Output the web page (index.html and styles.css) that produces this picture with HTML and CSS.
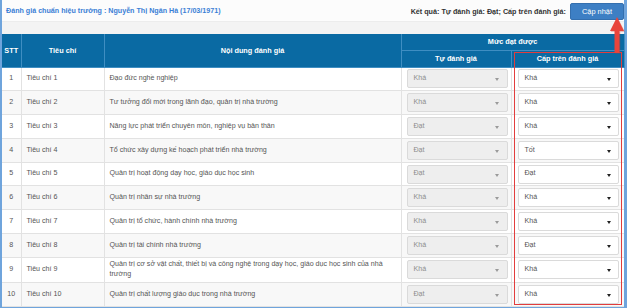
FILE: index.html
```html
<!DOCTYPE html>
<html lang="vi">
<head>
<meta charset="utf-8">
<link rel="stylesheet" href="styles.css">
</head>
<body>
<div class="frame">
  <div class="topbar">
    <div class="title">Đánh giá chuẩn hiệu trưởng : Nguyễn Thị Ngân Hà (17/03/1971)</div>
    <div class="actions">
      <span class="result">Kết quả: Tự đánh giá: Đạt; Cấp trên đánh giá:</span>
      <button class="btn">Cập nhật</button>
    </div>
  </div>
  <div class="strip"></div>
  <table class="grid">
    <colgroup>
      <col class="c-stt"><col class="c-tc"><col class="c-nd"><col class="c-td"><col class="c-ct">
    </colgroup>
    <thead>
      <tr class="h1">
        <th rowspan="2">STT</th>
        <th rowspan="2">Tiêu chí</th>
        <th rowspan="2">Nội dung đánh giá</th>
        <th colspan="2">Mức đạt được</th>
      </tr>
      <tr class="h2">
        <th>Tự đánh giá</th>
        <th>Cấp trên đánh giá</th>
      </tr>
    </thead>
    <tbody>
      <tr><td class="stt">1</td><td>Tiêu chí 1</td><td class="nd">Đạo đức nghề nghiệp</td><td class="sel-cell"><div class="sel dis">Khá<i></i></div></td><td class="sel-cell r"><div class="sel">Khá<i></i></div></td></tr>
      <tr><td class="stt">2</td><td>Tiêu chí 2</td><td class="nd">Tư tưởng đổi mới trong lãnh đạo, quản trị nhà trường</td><td class="sel-cell"><div class="sel dis">Khá<i></i></div></td><td class="sel-cell r"><div class="sel">Khá<i></i></div></td></tr>
      <tr><td class="stt">3</td><td>Tiêu chí 3</td><td class="nd">Năng lực phát triển chuyên môn, nghiệp vụ bản thân</td><td class="sel-cell"><div class="sel dis">Đạt<i></i></div></td><td class="sel-cell r"><div class="sel">Khá<i></i></div></td></tr>
      <tr><td class="stt">4</td><td>Tiêu chí 4</td><td class="nd">Tổ chức xây dựng kế hoạch phát triển nhà trường</td><td class="sel-cell"><div class="sel dis">Đạt<i></i></div></td><td class="sel-cell r"><div class="sel">Tốt<i></i></div></td></tr>
      <tr><td class="stt">5</td><td>Tiêu chí 5</td><td class="nd">Quản trị hoạt động dạy học, giáo dục học sinh</td><td class="sel-cell"><div class="sel dis">Đạt<i></i></div></td><td class="sel-cell r"><div class="sel">Đạt<i></i></div></td></tr>
      <tr><td class="stt">6</td><td>Tiêu chí 6</td><td class="nd">Quản trị nhân sự nhà trường</td><td class="sel-cell"><div class="sel dis">Khá<i></i></div></td><td class="sel-cell r"><div class="sel">Khá<i></i></div></td></tr>
      <tr><td class="stt">7</td><td>Tiêu chí 7</td><td class="nd">Quản trị tổ chức, hành chính nhà trường</td><td class="sel-cell"><div class="sel dis">Khá<i></i></div></td><td class="sel-cell r"><div class="sel">Khá<i></i></div></td></tr>
      <tr><td class="stt">8</td><td>Tiêu chí 8</td><td class="nd">Quản trị tài chính nhà trường</td><td class="sel-cell"><div class="sel dis">Khá<i></i></div></td><td class="sel-cell r"><div class="sel">Đạt<i></i></div></td></tr>
      <tr class="tall"><td class="stt">9</td><td>Tiêu chí 9</td><td class="nd wide">Quản trị cơ sở vật chất, thiết bị và công nghệ trong dạy học, giáo dục học sinh của nhà<br>trường</td><td class="sel-cell"><div class="sel dis">Khá<i></i></div></td><td class="sel-cell r"><div class="sel">Khá<i></i></div></td></tr>
      <tr><td class="stt">10</td><td>Tiêu chí 10</td><td class="nd">Quản trị chất lượng giáo dục trong nhà trường</td><td class="sel-cell"><div class="sel dis">Đạt<i></i></div></td><td class="sel-cell r"><div class="sel">Khá<i></i></div></td></tr>
    </tbody>
  </table>
  <div class="highlight"></div>
  <svg class="arrow" width="16" height="38" viewBox="0 0 16 38">
    <polygon points="8,0 15,14 10.5,14 10.5,36 5.5,36 5.5,14 1,14" fill="#c9302c" opacity="0.35" transform="translate(0.8,0.8)"/>
    <polygon points="8,0 15,14 10.5,14 10.5,36 5.5,36 5.5,14 1,14" fill="#e8443b"/>
  </svg>
</div>
</body>
</html>
```

FILE: styles.css
```css
* { box-sizing: border-box; }
html, body { margin: 0; padding: 0; background: #ffffff; }
body {
  font-family: "Liberation Sans", Arial, sans-serif;
  font-size: 7.1px;
  color: #555555;
  width: 627px;
  height: 308px;
  overflow: hidden;
}
.frame {
  position: relative;
  width: 627px;
  height: 308px;
  border-left: 2px solid #6fa4dc;
  border-right: 3px solid #6fa4dc;
  border-bottom: 3px solid #6fa4dc;
  background: #ffffff;
}
.topbar {
  height: 22px;
  display: flex;
  align-items: center;
  justify-content: space-between;
  padding: 0 0 0 4px;
  background: #fcfcfc;
  border-bottom: 1px solid #ececec;
}
.title {
  color: #3b7fd6;
  font-weight: bold;
  font-size: 7.15px;
  padding-top: 1px;
}
.actions {
  display: flex;
  align-items: center;
  gap: 4px;
  height: 100%;
}
.result {
  color: #333333;
  font-weight: bold;
  font-size: 7.2px;
  padding-top: 1px;
}
.btn {
  width: 54px;
  height: 17px;
  margin-top: 1px;
  border: 1px solid #346fae;
  border-radius: 2px;
  background: #3d7fc4;
  color: #ffffff;
  font-family: "Liberation Sans", Arial, sans-serif;
  font-size: 7.4px;
  padding: 0;
}
.strip {
  height: 12px;
  background: #f3f3f3;
}
.grid {
  width: 622px;
  border-collapse: collapse;
  table-layout: fixed;
}
.c-stt { width: 19px; }
.c-tc { width: 83px; }
.c-nd { width: 297px; }
.c-td { width: 110px; }
.c-ct { width: 113px; }
.grid th {
  background: #0a6aa3;
  color: #ffffff;
  font-weight: bold;
  font-size: 7.3px;
  text-align: center;
  padding: 0;
  border: 1px solid #3f8ec2;
  border-top: none;
}
.grid th:first-child { border-left: none; }
.h1 th { height: 16px; }
.h2 th { height: 17px; }
.grid td {
  height: 23.8px;
  padding: 0 5px;
  border-right: 1px solid #e2e2e2;
  border-bottom: 1px solid #e2e2e2;
  line-height: 9.5px;
  vertical-align: middle;
  color: #555555;
}
.grid td.nd { padding-right: 0; }
.grid td.nd.wide { white-space: nowrap; overflow: hidden; }
.grid tbody tr:nth-child(even) td { background: #f8f8f8; }
.grid tr.tall td { height: 25px; }
.grid td.stt { text-align: center; padding: 0; }
.grid td.sel-cell { padding: 0 3px 0 5px; }
.grid td.sel-cell.r { padding: 0 5px 0 6px; border-right: none; }
.sel {
  position: relative;
  height: 19px;
  border: 1px solid #dadada;
  border-radius: 2px;
  background: #ffffff;
  color: #555555;
  padding-left: 6px;
  display: flex;
  align-items: center;
}
.sel i {
  position: absolute;
  right: 7px;
  top: 8px;
  border-left: 2.5px solid transparent;
  border-right: 2.5px solid transparent;
  border-top: 3px solid #222222;
}
.sel.dis {
  background: #eeeeee;
  color: #8d8d8d;
}
.sel.dis i {
  border-top-color: #9a9a9a;
  right: 8px;
}
.highlight {
  position: absolute;
  left: 512px;
  top: 52px;
  width: 108px;
  height: 253px;
  border: 1.5px solid #e23d3d;
  pointer-events: none;
}
.arrow {
  position: absolute;
  left: 607px;
  top: 17px;
}
```
